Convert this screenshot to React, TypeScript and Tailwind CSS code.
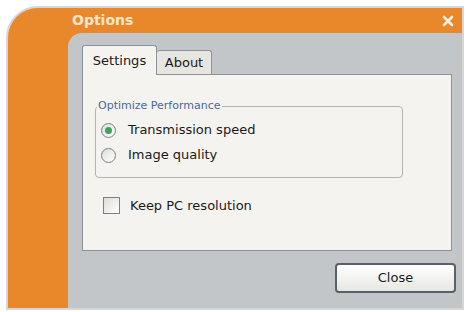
import React from "react";

const font = { fontFamily: "'DejaVu Sans', Verdana, sans-serif" };

const Radio = ({ checked, label }: { checked?: boolean; label: string }) => (
  <div className="flex h-[25px] items-center">
    <span className="ml-[5px] flex h-[15px] w-[15px] items-center justify-center rounded-full border border-[#7a8288] bg-gradient-to-br from-[#dcdcd8] to-white">
      {checked && <span className="h-[7px] w-[7px] rounded-full bg-[#3fa35a]" />}
    </span>
    <span className="ml-[12px] text-[13px] text-[#1a1a1a]">{label}</span>
  </div>
);

const App = () => {
  return (
    <div className="h-[312px] w-[471px] overflow-hidden bg-white pl-[6px] pt-[6px]" style={font}>
      <div className="flex h-[304px] w-[458px] flex-col rounded-tl-[32px] border-2 border-[#d6d6d6] bg-[#e8882a]">
        {/* title bar */}
        <div className="flex h-[25px] items-center justify-between pl-[64px] pr-[8px]">
          <span className="text-[14px] font-bold text-[#fbe6cc]">Options</span>
          <svg width="12" height="12" viewBox="0 0 12 12">
            <path d="M2 2 L10 10 M10 2 L2 10" stroke="#f6efe4" strokeWidth="2.6" strokeLinecap="round" />
          </svg>
        </div>
        <div className="flex flex-1">
          <div className="w-[60px]" />
          {/* client area */}
          <div className="flex flex-1 flex-col rounded-tl-[14px] bg-[#c3c6c9] pl-[14px] pr-[8px] pt-[12px]">
            {/* tabs */}
            <div className="flex items-end">
              <div className="relative z-10 -mb-px flex h-[30px] w-[75px] items-center justify-center rounded-t-[3px] border border-b-0 border-[#8c9398] bg-[#f4f3ef] text-[13px] text-[#1a1a1a]">
                Settings
              </div>
              <div className="flex h-[24px] w-[55px] items-center justify-center rounded-t-[3px] border border-l-0 border-b-0 border-[#8c9398] bg-[#e6e5e0] text-[13px] text-[#1a1a1a]">
                About
              </div>
            </div>
            {/* panel */}
            <div className="h-[177px] w-[370px] border border-[#8c9398] bg-[#f4f3ef] pl-[12px] pt-[23px]">
              <fieldset className="h-[80px] w-[308px] rounded-[4px] border border-[#b4b4ae] pt-[3px]">
                <legend className="ml-[1px] px-[1px] text-[11px] text-[#4a6a9a]">Optimize Performance</legend>
                <Radio checked label="Transmission speed" />
                <Radio label="Image quality" />
              </fieldset>
              <div className="mt-[18px] flex items-center">
                <span className="ml-[8px] h-[17px] w-[17px] border border-[#7a8288] bg-gradient-to-br from-[#dcdcd8] to-white" />
                <span className="ml-[10px] text-[13px] text-[#1a1a1a]">Keep PC resolution</span>
              </div>
            </div>
            {/* footer */}
            <div className="mt-[12px] flex justify-end">
              <button className="-mr-[2px] h-[30px] w-[121px] rounded-[4px] border-2 border-[#5a6166] bg-gradient-to-b from-white to-[#e6e6e2] text-[13px] text-[#1a1a1a]">
                Close
              </button>
            </div>
          </div>
        </div>
      </div>
    </div>
  );
};

export default App;
